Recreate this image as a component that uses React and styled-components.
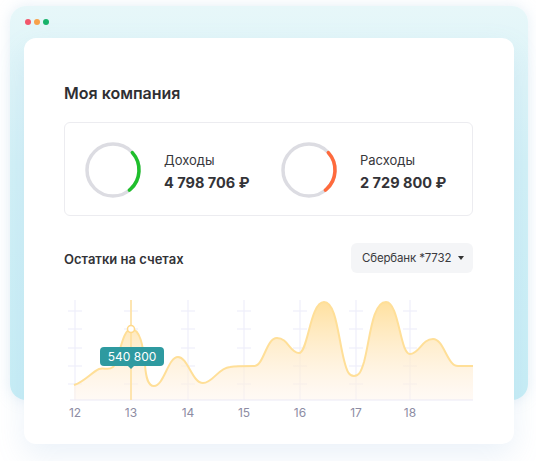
import React from 'react';
import styled, { createGlobalStyle } from 'styled-components';

const GlobalStyle = createGlobalStyle`
  html, body {
    margin: 0;
    padding: 0;
    background: #ffffff;
    font-family: Inter, "Noto Sans", "Liberation Sans", sans-serif;
    color: #333333;
  }
`;

const days = [
  { label: '12', x: 75 },
  { label: '13', x: 131 },
  { label: '14', x: 188 },
  { label: '15', x: 244 },
  { label: '16', x: 300 },
  { label: '17', x: 356 },
  { label: '18', x: 410 },
];

const ticks = [311, 329, 348, 366, 384];

const curve =
  'M74,385 C84,382 92,372 99,369 C104,367 108,371 113,367 C119,362 122,329 131,329 ' +
  'C140,329 143,345 145,365 C146,378 148,386 154,386 C164,386 168,357 178,357 ' +
  'C188,357 192,383 203,383 C213,383 218,368 230,367 C236,366 245,366 254,366 ' +
  'C264,366 266,338 277,338 C288,338 290,353 299,353 C308,353 310,302 324,302 ' +
  'C336,302 338,336 344,360 C347,372 349,376 354,376 C359,376 361,372 364,362 ' +
  'C370,340 372,302 386,302 C399,302 400,354 410,354 C419,354 422,339 433,339 ' +
  'C444,339 447,366 458,366 L473,366';

const Ring = ({ color }) => (
  <svg width="58" height="58" viewBox="0 0 58 58">
    <circle cx="29" cy="29" r="26" fill="none" stroke="#dcdce2" strokeWidth="3.5" />
    <circle
      cx="29"
      cy="29"
      r="26"
      fill="none"
      stroke={color}
      strokeWidth="3.5"
      strokeLinecap="round"
      strokeDasharray="42 200"
      transform="rotate(-42 29 29)"
    />
  </svg>
);

const App = () => {
  return (
    <Page>
      <GlobalStyle />
      <Frame>
        <Dots>
          <Dot color="#f2566b" />
          <Dot color="#f7a14a" />
          <Dot color="#17b36a" />
        </Dots>
        <Card>
          <Title>Моя компания</Title>
          <Stats>
            <Stat>
              <Ring color="#1fbf2c" />
              <StatText>
                <StatLabel>Доходы</StatLabel>
                <StatValue>4 798 706 ₽</StatValue>
              </StatText>
            </Stat>
            <Stat>
              <Ring color="#ff6a3c" />
              <StatText>
                <StatLabel>Расходы</StatLabel>
                <StatValue>2 729 800 ₽</StatValue>
              </StatText>
            </Stat>
          </Stats>

          <SectionHead>
            <SectionTitle>Остатки на счетах</SectionTitle>
            <Select>
              Сбербанк *7732
              <Caret />
            </Select>
          </SectionHead>

          <ChartBox>
            <svg width="409" height="130" viewBox="64 295 409 130">
              <defs>
                <linearGradient id="fillGrad" x1="0" y1="0" x2="0" y2="1">
                  <stop offset="0" stopColor="#ffdf9a" stopOpacity="0.95" />
                  <stop offset="1" stopColor="#fff4ec" stopOpacity="0.5" />
                </linearGradient>
              </defs>
              {days.map((d) => (
                <g key={d.label}>
                  <line x1={d.x} y1="300" x2={d.x} y2="400" stroke="#efeefa" strokeWidth="1.2" />
                  {ticks.map((t) => (
                    <line key={t} x1={d.x - 7} y1={t} x2={d.x + 7} y2={t} stroke="#efeefa" strokeWidth="1.2" />
                  ))}
                </g>
              ))}
              <path d={curve + ' L473,400 L74,400 Z'} fill="url(#fillGrad)" />
              <path d={curve} fill="none" stroke="#ffdf98" strokeWidth="2" />
              <line x1="70" y1="400" x2="473" y2="400" stroke="#ebeaf5" strokeWidth="1.2" />
              <line x1="131" y1="300" x2="131" y2="400" stroke="#ffdf98" strokeWidth="1.5" />
              <circle cx="131" cy="329" r="3.5" fill="#ffffff" stroke="#ffd98a" strokeWidth="1.5" />
              {days.map((d) => (
                <text
                  key={d.label}
                  x={d.x}
                  y="417"
                  textAnchor="middle"
                  fontSize="12"
                  fill="#8d8ca3"
                  fontFamily="Inter, 'Noto Sans', sans-serif"
                >
                  {d.label}
                </text>
              ))}
            </svg>
            <Tooltip>540 800</Tooltip>
          </ChartBox>
        </Card>
      </Frame>
    </Page>
  );
};

export default App;

const Page = styled.div`
  padding: 6px 8px 0 10px;
  height: 461px;
  box-sizing: border-box;
  overflow: hidden;
`;

const Frame = styled.div`
  height: 394px;
  border-radius: 16px;
  background: linear-gradient(180deg, #e7f7f9 0%, #d3f1f7 40%, #c8eef6 100%);
  box-shadow: 0 0 14px rgba(180, 210, 230, 0.35);
  padding: 13px 14px 0 14px;
  box-sizing: border-box;
`;

const Dots = styled.div`
  display: flex;
  gap: 3px;
  height: 6px;
  margin-left: 1px;
`;

const Dot = styled.span`
  width: 6px;
  height: 6px;
  border-radius: 50%;
  background: ${(p) => p.color};
`;

const Card = styled.div`
  margin-top: 13px;
  height: 406px;
  box-sizing: border-box;
  background: #ffffff;
  border-radius: 12px;
  padding: 45px 41px 0 40px;
  box-shadow: 0 12px 30px rgba(110, 160, 210, 0.14);
`;

const Title = styled.div`
  font-size: 16px;
  line-height: 20px;
  font-weight: 600;
  color: #2f2f33;
  margin-bottom: 19px;
`;

const Stats = styled.div`
  height: 94px;
  box-sizing: border-box;
  border: 1px solid #ececf0;
  border-radius: 6px;
  display: flex;
  align-items: center;
  padding: 2px 0 0 19px;
`;

const Stat = styled.div`
  flex: 0 0 196px;
  display: flex;
  align-items: center;
  gap: 22px;
`;

const StatText = styled.div`
  display: flex;
  flex-direction: column;
  gap: 4px;
  margin-top: 3px;
`;

const StatLabel = styled.div`
  font-size: 13px;
  line-height: 18px;
  color: #38383c;
`;

const StatValue = styled.div`
  font-size: 14.5px;
  line-height: 20px;
  font-weight: 700;
  color: #333337;
`;

const SectionHead = styled.div`
  margin-top: 27px;
  height: 30px;
  display: flex;
  align-items: center;
  justify-content: space-between;
`;

const SectionTitle = styled.div`
  font-size: 13px;
  font-weight: 600;
  color: #333337;
  margin-top: 2px;
`;

const Select = styled.div`
  height: 30px;
  width: 122px;
  box-sizing: border-box;
  background: #f4f5f7;
  border-radius: 6px;
  padding: 0 9px 0 11px;
  display: flex;
  align-items: center;
  font-size: 11.5px;
  letter-spacing: -0.15px;
  white-space: nowrap;
  color: #3a3a3e;
`;

const Caret = styled.span`
  margin-left: auto;
  width: 0;
  height: 0;
  border-left: 3.5px solid transparent;
  border-right: 3.5px solid transparent;
  border-top: 4px solid #333;
`;

const ChartBox = styled.div`
  position: relative;
  margin-top: 22px;
  height: 130px;
`;

const Tooltip = styled.div`
  position: absolute;
  left: 36px;
  top: 52px;
  width: 64px;
  height: 19px;
  border-radius: 4px;
  background: #2e9aa0;
  color: #ffffff;
  font-size: 12px;
  line-height: 19px;
  text-align: center;

  &::after {
    content: '';
    position: absolute;
    left: 28px;
    bottom: -3px;
    border-left: 3px solid transparent;
    border-right: 3px solid transparent;
    border-top: 3px solid #2e9aa0;
  }
`;
